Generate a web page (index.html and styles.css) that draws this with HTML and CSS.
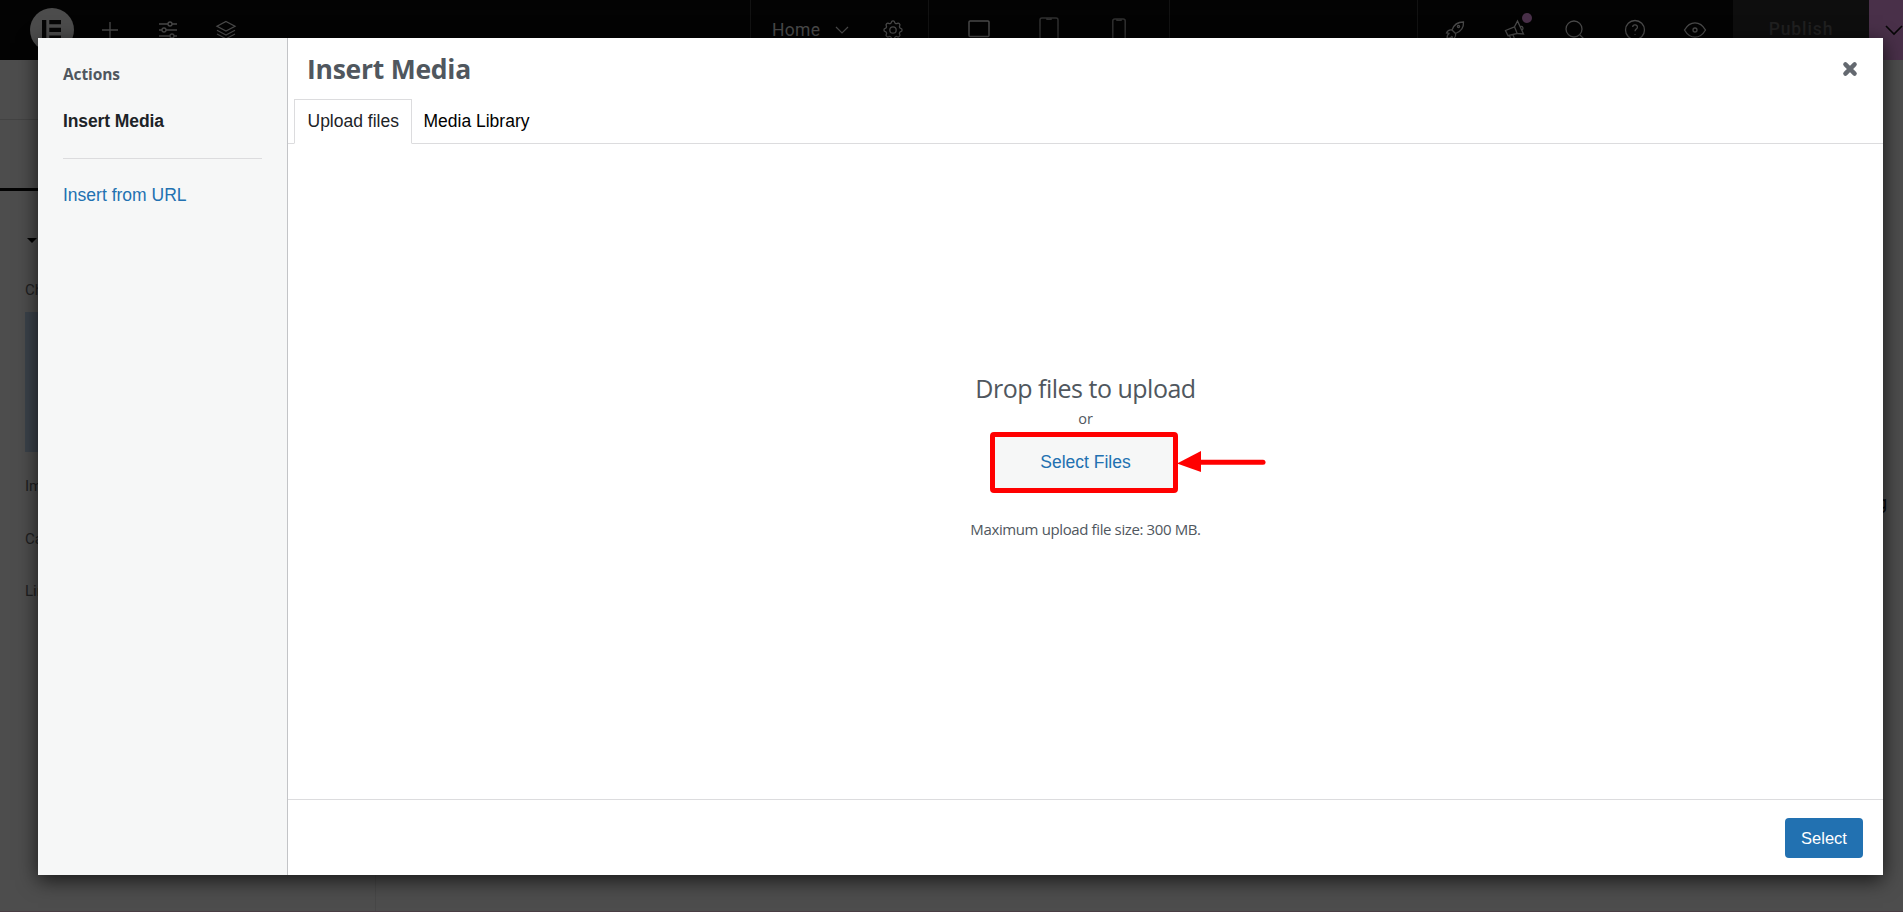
FILE: index.html
```html
<!DOCTYPE html>
<html lang="en">
<head>
    <meta charset="UTF-8">
    <meta name="viewport" content="width=device-width, initial-scale=1.0">
    <title>Insert Media</title>
    <link rel="stylesheet" href="styles.css">
</head>
<body>
    <div class="editor">
        <header class="topbar">
            <div class="tools">
                <svg class="logo" width="44" height="44" viewBox="0 0 44 44"><circle cx="22" cy="22" r="22" fill="#4c4c4c"/><path d="M12 12h4.300v20H12zM19.300 12H31v4.200H19.300zM19.300 19.800H31v4.200H19.300zM19.300 27.600H31v4.200H19.300z" fill="#060606"/></svg>
                <svg class="icon" viewBox="0 0 24 24"><path d="M12 4v16M4 12h16"/></svg>
                <svg class="icon" viewBox="0 0 24 24"><path d="M3 6h9M16 6h5M3 12h3M10 12h11M3 18h11M18 18h3"/><circle cx="14" cy="6" r="2"/><circle cx="8" cy="12" r="2"/><circle cx="16" cy="18" r="2"/></svg>
                <svg class="icon" viewBox="0 0 24 24"><path d="M12 3.500l9 4.800-9 4.800-9-4.800zM3 12.200l9 4.800 9-4.800M3 16l9 4.800 9-4.800"/></svg>
            </div>
            <div class="page-name">
                <span>Home</span>
                <svg class="chevron" width="14" height="8" viewBox="0 0 14 8"><path d="M1 1l6 6 6-6"/></svg>
                <svg class="icon gear" viewBox="0 0 24 24"><path d="M10.300 4.300c.4-1.800 3-1.800 3.400 0a1.700 1.700 0 0 0 2.600 1.100c1.500-.9 3.300.8 2.400 2.400a1.700 1.700 0 0 0 1 2.500c1.800.4 1.800 3 0 3.400a1.700 1.700 0 0 0-1 2.600c.9 1.500-.9 3.300-2.400 2.400a1.700 1.700 0 0 0-2.600 1c-.4 1.800-3 1.800-3.400 0a1.700 1.700 0 0 0-2.600-1c-1.500.9-3.300-.9-2.400-2.400a1.700 1.700 0 0 0-1-2.600c-1.800-.4-1.800-3 0-3.400a1.700 1.700 0 0 0 1-2.500c-.9-1.600.9-3.300 2.400-2.400a1.700 1.700 0 0 0 2.600-1.100z"/><circle cx="12" cy="12" r="3.200"/></svg>
            </div>
            <div class="devices">
                <svg width="22" height="18" viewBox="0 0 22 18"><rect x="1" y="1" width="20" height="15.400" rx="1" stroke="#4a4a4a" stroke-width="1.500"/></svg>
                <svg width="20" height="26" viewBox="0 0 20 26"><rect x="1" y="1" width="18" height="24" rx="2"/><path d="M8 1v1.300h4V1"/></svg>
                <svg width="14" height="24" viewBox="0 0 14 24"><rect x=".8" y="1" width="12.400" height="22" rx="2"/><path d="M5 1v1.300h4V1"/></svg>
            </div>
            <div class="utilities">
                <svg class="icon" viewBox="0 0 24 24"><path d="M9 12c1.500-4.500 5-8 11.500-8 .3 5-2.500 9.500-8 11.500zM9 12c-2.500-.5-4.500.5-5.500 3l2.500.3M12.500 15.500c.5 2.500-.5 4.500-3 5.500l-.3-2.500M6.500 15.200c-2 1-2.500 3-2.500 5.300 2.500 0 4.300-.5 5.200-2.500"/><circle cx="15.500" cy="8.500" r="1.100"/></svg>
                <span class="whats-new">
                    <svg class="icon" viewBox="0 0 24 24"><path d="M2.500 12.500l9-3.700 2.700 6.700-9.200 2.200zM11.500 8.800l3-5.800 6 13-6.300-.5M17.300 8.500c2.600-.8 3.600 2 1.800 3.600M6.500 17.500l2 5M10 16.700l2 5.500"/></svg>
                    <i class="dot"></i>
                </span>
                <svg class="icon" viewBox="0 0 24 24"><circle cx="11" cy="11" r="8"/><path d="M17 17l5 5"/></svg>
                <svg class="icon" viewBox="0 0 24 24"><circle cx="12" cy="12" r="9.500"/><path d="M9.700 9c.2-3 4.900-2.600 4.700.2-.1 1.900-2.400 1.800-2.400 4.100M12 16v.8"/></svg>
                <svg class="icon" viewBox="0 0 24 24"><path d="M1.500 12C7 2.500 17 2.500 22.500 12 17 21.500 7 21.500 1.500 12z"/><circle cx="12" cy="12" r="2"/></svg>
            </div>
            <div class="publish">Publish</div>
            <div class="publish-more">
                <svg width="20" height="12" viewBox="0 0 20 12"><path d="M2 2l8 8 8-8"/></svg>
            </div>
        </header>
        <div class="workspace">
            <aside class="panel">
                <div class="panel-header"></div>
                <div class="panel-tabs"></div>
                <div class="section-title"><i class="caret"></i></div>
                <div class="control-label">Choose Image</div>
                <div class="image-preview"></div>
                <div class="control">Image Resolution</div>
                <div class="control">Caption</div>
                <div class="control">Link</div>
            </aside>
            <main class="preview"><span class="preview-text">Heading</span></main>
        </div>
    </div>

    <div class="media-modal">
        <aside class="media-menu">
            <h2>Actions</h2>
            <a class="menu-item active">Insert Media</a>
            <div class="separator"></div>
            <a class="menu-item">Insert from URL</a>
        </aside>
        <section class="media-frame">
            <div class="frame-title">
                <h1>Insert Media</h1>
                <svg class="close" width="16" height="16" viewBox="0 0 16 16"><path d="M3.400 3.400l9.200 9.200M12.600 3.400l-9.200 9.200"/></svg>
            </div>
            <nav class="tabs">
                <a class="tab selected">Upload files</a>
                <a class="tab library">Media Library</a>
            </nav>
            <div class="uploader">
                <div class="drop-title">Drop files to upload</div>
                <div class="or">or</div>
                <div class="browse">
                    <button class="select-files">Select Files</button>
                    <svg class="arrow" width="90" height="22" viewBox="0 0 90 22"><path d="M0 12.600L24 0v21z" fill="#f00"/><path d="M22 11.200h64" stroke="#f00" stroke-width="5" stroke-linecap="round"/></svg>
                </div>
                <div class="max-size">Maximum upload file size: 300 MB.</div>
            </div>
            <footer class="toolbar">
                <button class="select">Select</button>
            </footer>
        </section>
    </div>
</body>
</html>
```

FILE: styles.css
```css
* {
    box-sizing: border-box;
}

body {
    margin: 0;
    width: 1903px;
    height: 912px;
    overflow: hidden;
    position: relative;
    background: #4d4d4d;
    font-family: "Open Sans", "Noto Sans", sans-serif;
}

h1, h2 {
    margin: 0;
}

svg {
    fill: none;
    flex-shrink: 0;
}

/* Dimmed editor behind the modal */
.editor {
    height: 912px;
    font-family: Roboto, sans-serif;
    border-bottom: 1px solid #493d44;
}

.topbar {
    display: flex;
    height: 60px;
    background: #030303;
    stroke: #4a4a4a;
}

.icon {
    display: block;
    width: 24px;
    height: 24px;
    stroke-width: 1.3;
}

.tools {
    display: flex;
    align-items: center;
    width: 750px;
    padding-left: 30px;
    gap: 34px;
}

.tools .logo {
    stroke: none;
    margin-right: -10px;
}

.page-name {
    display: flex;
    align-items: center;
    width: 179px;
    padding-left: 21px;
    border-left: 1px solid #121212;
    border-right: 1px solid #121212;
    color: #4a4a4a;
    font-size: 17.5px;
    letter-spacing: 0.3px;
}

.page-name span {
    width: 63px;
}

.chevron {
    stroke-width: 1.2;
}

.gear {
    margin-left: 32px;
}

.devices {
    display: flex;
    align-items: center;
    width: 241px;
    padding-left: 39px;
    gap: 49px;
    border-right: 1px solid #121212;
    stroke: #303030;
    stroke-width: 1.5;
}

.devices svg:first-child {
    margin-top: -3px;
}

.devices svg:last-child {
    margin-left: 4px;
}

.utilities {
    display: flex;
    align-items: center;
    width: 316px;
    margin-left: 247px;
    padding-left: 25px;
    gap: 36px;
    border-left: 1px solid #121212;
}

.whats-new {
    position: relative;
}

.dot {
    position: absolute;
    right: -5px;
    top: -5px;
    width: 10px;
    height: 10px;
    border-radius: 50%;
    background: #493049;
}

.publish {
    width: 136px;
    background: #0e0e0e;
    color: #202020;
    font-size: 17.5px;
    font-weight: 500;
    line-height: 59px;
    text-align: center;
    letter-spacing: 0.9px;
}

.publish-more {
    display: flex;
    align-items: center;
    width: 34px;
    padding-left: 15px;
    background: #493049;
    stroke: #060606;
    stroke-width: 1.6;
}

.workspace {
    display: flex;
    height: 851px;
}

.panel {
    width: 376px;
    border-right: 1px solid #474747;
    color: #1f2021;
    font-size: 15px;
}

.panel-header {
    height: 60px;
    border-bottom: 1px solid #434343;
}

.panel-tabs {
    height: 71px;
    border-bottom: 3px solid #030303;
}

.section-title {
    height: 82px;
    padding: 47px 0 0 27px;
}

.caret {
    display: block;
    width: 10px;
    border: 5px solid transparent;
    border-top-color: #000;
    border-bottom: 0;
}

.control-label {
    height: 39px;
    padding-left: 25px;
    line-height: 35px;
}

.image-preview {
    height: 140px;
    margin: 0 20px 9px 25px;
    background: #3b424a;
}

.control {
    height: 52.5px;
    padding-left: 25px;
    line-height: 51px;
}

.preview {
    flex: 1;
    display: flex;
    justify-content: flex-end;
    padding: 431px 16px 0 0;
}

.preview-text {
    color: #060606;
    font-size: 18px;
    line-height: 24px;
}

/* Media modal */
.media-modal {
    position: absolute;
    top: 38px;
    left: 38px;
    display: flex;
    width: 1845px;
    height: 837px;
    background: #fff;
    box-shadow: 0 5px 19px rgba(0, 0, 0, 0.7);
}

.media-menu {
    width: 250px;
    padding: 24px 25px 0;
    background: #f6f7f7;
    border-right: 1px solid #c3c4c7;
}

.media-menu h2 {
    color: #50575e;
    font-size: 15.5px;
    line-height: 24px;
    letter-spacing: -0.1px;
}

.menu-item {
    display: block;
    font-family: "Liberation Sans", Arial, sans-serif;
    font-size: 17.5px;
    line-height: 24px;
    color: #2271b1;
}

.menu-item.active {
    margin-top: 23px;
    font-weight: bold;
    letter-spacing: -0.1px;
    color: #1d2327;
}

.separator {
    margin: 25px 0 24px;
    border-top: 1px solid #dcdcde;
}

.media-frame {
    flex: 1;
    display: flex;
    flex-direction: column;
}

.frame-title {
    display: flex;
    justify-content: space-between;
    height: 61px;
    padding: 0 25px 0 19px;
}

.frame-title h1 {
    color: #50575e;
    font-size: 26.5px;
    line-height: 63px;
    letter-spacing: -0.25px;
}

.close {
    margin-top: 23px;
    stroke: #646970;
    stroke-width: 4.4;
    stroke-linecap: round;
}

.tabs {
    display: flex;
    height: 45px;
    padding-left: 6px;
    border-bottom: 1px solid #dcdcde;
    font-family: "Liberation Sans", Arial, sans-serif;
}

.tab {
    height: 45px;
    padding: 0 12.5px;
    border: 1px solid transparent;
    font-size: 17.5px;
    line-height: 42px;
    color: #000;
}

.tab.selected {
    border-color: #dcdcde;
    border-bottom-color: #fff;
    background: #fff;
    color: #1d2327;
}

.tab.library {
    padding-left: 10px;
}

.uploader {
    flex: 1;
    display: flex;
    flex-direction: column;
    align-items: center;
    padding-top: 227px;
    color: #50575e;
}

.drop-title {
    font-size: 25px;
    line-height: 34px;
    letter-spacing: -0.5px;
}

.or {
    margin-top: 4px;
    font-size: 14.5px;
    line-height: 20px;
}

.browse {
    position: relative;
    margin: 3px 3px 0 0;
}

.select-files {
    display: block;
    width: 188px;
    height: 61px;
    padding: 0 0 0 3px;
    background: #f6f7f7;
    border: 5px solid #f00;
    border-radius: 4px;
    color: #2271b1;
    font-family: "Liberation Sans", Arial, sans-serif;
    font-size: 17.5px;
}

/* Callout pointing at the button */
.arrow {
    position: absolute;
    left: 187px;
    top: 19px;
}

.max-size {
    margin-top: 25px;
    font-size: 15px;
    line-height: 23px;
    letter-spacing: -0.38px;
}

.toolbar {
    display: flex;
    justify-content: flex-end;
    height: 76px;
    padding: 18px 20px;
    border-top: 1px solid #dcdcde;
}

.select {
    width: 78px;
    height: 40px;
    padding: 0;
    border: 0;
    border-radius: 4px;
    background: #2271b1;
    color: #fff;
    font-family: "Liberation Sans", Arial, sans-serif;
    font-size: 16.5px;
}
```
